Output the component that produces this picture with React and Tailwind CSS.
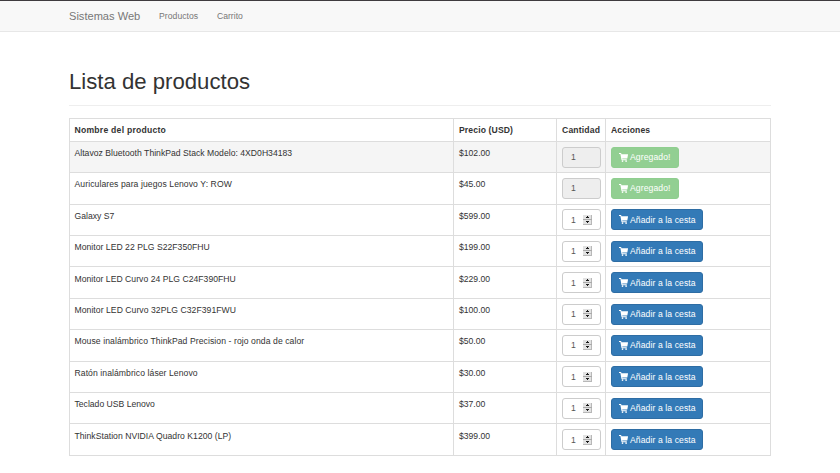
import React from "react";

const products = [
  { name: "Altavoz Bluetooth ThinkPad Stack Modelo: 4XD0H34183", price: "$102.00", added: true, hover: true, tracking: "tracking-[0.02px]" },
  { name: "Auriculares para juegos Lenovo Y: ROW", price: "$45.00", added: true, tracking: "tracking-[0.08px]" },
  { name: "Galaxy S7", price: "$599.00", tracking: "" },
  { name: "Monitor LED 22 PLG S22F350FHU", price: "$199.00", tracking: "tracking-[0.03px]" },
  { name: "Monitor LED Curvo 24 PLG C24F390FHU", price: "$229.00", tracking: "tracking-[0.03px]" },
  { name: "Monitor LED Curvo 32PLG C32F391FWU", price: "$100.00", tracking: "tracking-[0.05px]" },
  { name: "Mouse inalámbrico ThinkPad Precision - rojo onda de calor", price: "$50.00", tracking: "tracking-[0.08px]" },
  { name: "Ratón inalámbrico láser Lenovo", price: "$30.00", tracking: "tracking-[0.07px]" },
  { name: "Teclado USB Lenovo", price: "$37.00", tracking: "" },
  { name: "ThinkStation NVIDIA Quadro K1200 (LP)", price: "$399.00", tracking: "tracking-[0.03px]" },
];

function Cart() {
  return (
    <svg viewBox="0 0 18 18" className="h-[9px] w-[9px] shrink-0" fill="currentColor">
      <path d="M0 0h3.500c.5 0 .9.3 1 .8L5 2.500h12.400c.5 0 .7.4.6.8l-1.300 7c-.1.5-.5.8-1 .8H6.500l.3 1.600H15.500v1.800H5.800c-.5 0-.8-.3-.9-.8L2.800 1.800H0z" />
      <circle cx="7" cy="16.200" r="1.700" />
      <circle cx="14.200" cy="16.200" r="1.700" />
    </svg>
  );
}

function Spinner() {
  return (
    <svg width="9" height="10" className="block" shapeRendering="crispEdges">
      <rect width="9" height="10" fill="#b8b8b8" />
      <path d="M0 0h8v4H0zM0 5h8v4H0z" fill="#e2e2e2" />
      <path d="M4 1h1v1H4zM3 2h3v1H3zM3 6h3v1H3zM4 7h1v1H4z" fill="#1a1a1a" />
      <path d="M0 4h9v1H0z" fill="#aaa" />
    </svg>
  );
}

const columns = "grid grid-cols-[384px_103px_49px_165px]";
const cell = "border-r border-b border-[#ddd] whitespace-nowrap";

function Row({ product }) {
  const { name, price, added, hover, tracking } = product;
  return (
    <div className={`${columns} h-[31.4px] ${hover ? "bg-[#f5f5f5]" : ""}`}>
      <div className={`${cell} pt-[5.200px] pl-[4.500px] ${tracking}`}>{name}</div>
      <div className={`${cell} pt-[5.200px] pl-[5px]`}>{price}</div>
      <div className={`${cell} pt-[4.800px] pl-[5px]`}>
        <div className={`flex h-[21px] w-[39px] items-center rounded-[3px] border border-[#ccc] pl-[8px] text-[#555] ${added ? "bg-[#eee]" : "bg-white"}`}>
          <span className="w-[12px]">1</span>
          {!added && <Spinner />}
        </div>
      </div>
      <div className={`${cell} pt-[4.800px] pl-[5px]`}>
        <div className={`flex h-[21px] items-center gap-[2px] rounded-[3px] border pl-[7px] tracking-[0.09px] text-white ${added ? "w-[68px] border-[#8fce8f] bg-[#92cf92]" : "w-[92px] border-[#2e6da4] bg-[#337ab7]"}`}>
          <Cart />
          <span>{added ? "Agregado!" : "Añadir a la cesta"}</span>
        </div>
      </div>
    </div>
  );
}

export default function App() {
  return (
    <div className="h-[473px] w-[840px] overflow-hidden bg-white font-['Liberation_Sans',Arial,sans-serif] text-[8.620px] leading-[12px] text-[#333]">
      <nav className="flex h-8 items-center border-t border-b border-t-[#3f3b3f] border-b-[#e7e7e7] bg-[#f8f8f8] pl-[69px] text-[#777]">
        <a className="w-[90px] text-[11.080px]">Sistemas Web</a>
        <a className="w-[58px] tracking-[0.05px]">Productos</a>
        <a>Carrito</a>
      </nav>
      <main className="ml-[69px] w-[702px] pt-[36px]">
        <h1 className="h-[38px] border-b border-[#eee] text-[22.160px] leading-[27px]">Lista de productos</h1>
        <div className="mt-[12px] border-t border-l border-[#ddd]">
          <div className={`${columns} h-[22.800px] font-bold`}>
            <div className={`${cell} pt-[5px] pl-[4.500px] tracking-[0.24px]`}>Nombre del producto</div>
            <div className={`${cell} pt-[5px] pl-[5px] tracking-[0.12px]`}>Precio (USD)</div>
            <div className={`${cell} pt-[5px] pl-[5px] tracking-[0.16px]`}>Cantidad</div>
            <div className={`${cell} pt-[5px] pl-[5px] tracking-[0.12px]`}>Acciones</div>
          </div>
          {products.map((p) => <Row key={p.name} product={p} />)}
        </div>
      </main>
    </div>
  );
}
